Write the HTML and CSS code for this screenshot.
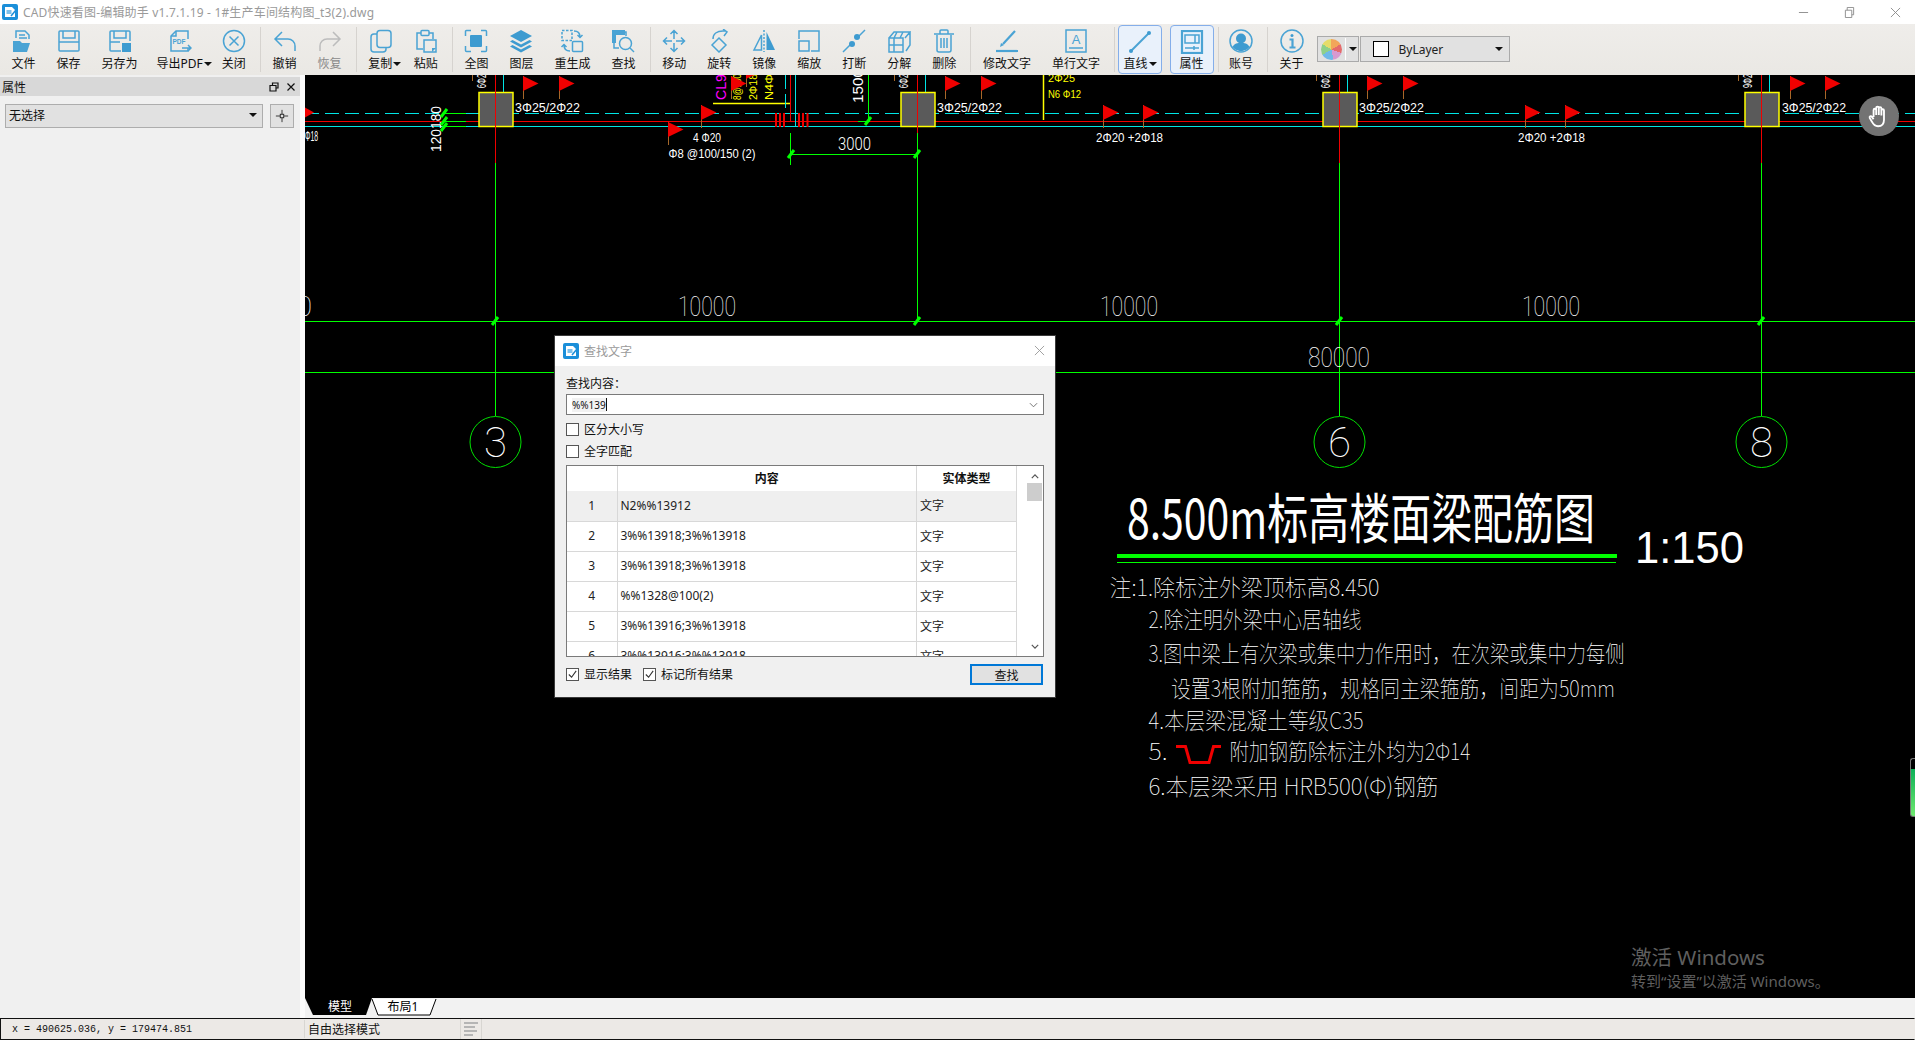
FILE: index.html
```html
<!DOCTYPE html>
<html lang="zh-CN">
<head>
<meta charset="utf-8">
<title>CAD快速看图</title>
<link rel="stylesheet" href="styles.css">
</head>
<body>
<div class="app">
  <header class="titlebar">
    <svg class="logo" viewBox="0 0 16 16"><rect width="16" height="16" rx="2" fill="#1b8fd9"/><path d="M3 3h7l3 3v7H3z" fill="#fff"/><rect x="4.500" y="6" width="5" height="4" fill="#7cc0ea"/><path d="M9 12l5-6" stroke="#1b8fd9" stroke-width="1.500"/></svg>
    <span class="title-text">CAD快速看图-编辑助手 v1.7.1.19 - 1#生产车间结构图_t3(2).dwg</span>
    <div class="winbtns">
      <svg class="winbtn" viewBox="0 0 12 12"><path d="M1 6h10" /></svg>
      <svg class="winbtn" viewBox="0 0 12 12"><path d="M1.500 3.500h7v8h-7zM3.500 3.500v-3h7v8h-2"/></svg>
      <svg class="winbtn" viewBox="0 0 12 12"><path d="M1 1l10 10M11 1L1 11"/></svg>
    </div>
  </header>

  <nav class="toolbar">
    <div class="tool"><svg class="ic" viewBox="0 0 24 24"><path d="M4 9V2h9l4 4v4"/><path d="M7 6h6M7 9h8" /><path class="f" d="M1 12h7l2 2h8l-3 9H1z"/></svg><span>文件</span></div>
    <div class="tool"><svg class="ic" viewBox="0 0 24 24"><path d="M2 3a1 1 0 0 1 1-1h18a1 1 0 0 1 1 1v18a1 1 0 0 1-1 1H3a1 1 0 0 1-1-1z"/><path d="M6 2v7h12V2M2 13h20"/></svg><span>保存</span></div>
    <div class="tool"><svg class="ic" viewBox="0 0 24 24"><path d="M13 22H3a1 1 0 0 1-1-1V3a1 1 0 0 1 1-1h18a1 1 0 0 1 1 1v9"/><path d="M6 2v7h12V2M2 13h10"/><rect class="fl" x="14" y="14" width="9" height="9"/></svg><span>另存为</span></div>
    <div class="tool drop drop-pdf"><svg class="ic off" viewBox="0 0 24 24"><path d="M20 10V2H8L3 7v15h17v-3"/><path d="M3 7h5V2"/><text class="pdf" x="4.500" y="15">PDF</text><path d="M14 19h9M20 16l3 3-3 3"/></svg><span class="droplabel">导出PDF<i class="caret"></i></span></div>
    <div class="tool"><svg class="ic" viewBox="0 0 24 24"><circle cx="12" cy="12" r="10.500"/><path d="M7.500 7.500l9 9M16.500 7.500l-9 9"/></svg><span>关闭</span></div>
    <div class="sep"></div>
    <div class="tool"><svg class="ic" viewBox="0 0 24 24"><path d="M9 3L2 10l7 7M2 10h13a7 7 0 0 1 7 7v5"/></svg><span>撤销</span></div>
    <div class="tool"><svg class="ic grey" viewBox="0 0 24 24"><path d="M15 3l7 7-7 7M22 10H9a7 7 0 0 0-7 7v5"/></svg><span class="dim">恢复</span></div>
    <div class="sep"></div>
    <div class="tool drop"><svg class="ic off" viewBox="0 0 24 24"><rect x="8" y="1.500" width="14" height="17" rx="3"/><path d="M8 5H5a3 3 0 0 0-3 3v12a3 3 0 0 0 3 3h9a3 3 0 0 0 3-3v-1"/></svg><span class="droplabel">复制<i class="caret"></i></span></div>
    <div class="tool"><svg class="ic" viewBox="0 0 24 24"><path d="M9 20H3V4h4M15 4h4v6"/><rect x="7" y="1.500" width="8" height="5" rx="1"/><path d="M10 11h12v12H10z"/><path class="f" d="M18 23l4-4h-4z"/></svg><span>粘贴</span></div>
    <div class="sep"></div>
    <div class="tool"><svg class="ic" viewBox="0 0 24 24"><path d="M1.500 7V2.500a1 1 0 0 1 1-1H7M17 1.500h4.500a1 1 0 0 1 1 1V7M22.500 17v4.500a1 1 0 0 1-1 1H17M7 22.500H2.500a1 1 0 0 1-1-1V17"/><rect class="fl" x="6" y="6" width="12" height="12" rx="1"/></svg><span>全图</span></div>
    <div class="tool"><svg class="ic" viewBox="0 0 24 24"><path class="fl" d="M12 1l11 6-11 6L1 7z"/><path class="fl" d="M3.500 11L1 12.500l11 6 11-6-2.500-1.500-8.500 4.500z"/><path class="fl" d="M3.500 16L1 17.500l11 6 11-6-2.500-1.500-8.500 4.500z"/></svg><span>图层</span></div>
    <div class="tool"><svg class="ic" viewBox="0 0 24 24"><rect x="2" y="1.500" width="10" height="10" stroke-dasharray="2.500 1.500"/><rect x="12.500" y="12.500" width="10" height="10" rx="1"/><path d="M14 2c4 0 6 2 6 6M17.500 6l2.500 2.500L22.500 6M10 22c-4 0-6-2-6-6M1.500 18L4 15.500 6.500 18"/></svg><span>重生成</span></div>
    <div class="tool"><svg class="ic" viewBox="0 0 24 24"><path d="M8 19H3V3h12v4"/><path class="f" d="M1 1h13v5H5v8H1z"/><circle cx="14.500" cy="14.500" r="6"/><path d="M19 19l4 4"/></svg><span>查找</span></div>
    <div class="sep"></div>
    <div class="tool"><svg class="ic" viewBox="0 0 24 24"><path d="M12 2v8M12 14v8M2 12h8M14 12h8M8.500 5L12 1.500 15.500 5M8.500 19l3.500 3.500 3.500-3.500M5 8.500L1.500 12 5 15.500M19 8.500l3.500 3.500-3.500 3.500"/></svg><span>移动</span></div>
    <div class="tool"><svg class="ic" viewBox="0 0 24 24"><path d="M12 9l7 7-7 7-7-7z"/><path d="M6 10c0-5 4-8 10-8h3M16 0l4 3-3 4"/></svg><span>旋转</span></div>
    <div class="tool"><svg class="ic" viewBox="0 0 24 24"><path d="M9.500 6L2 21h7.500z"/><path class="fl" d="M14.500 3L23 21h-8.500z"/><path d="M12 1v22" stroke-dasharray="2 1.500"/></svg><span>镜像</span></div>
    <div class="tool"><svg class="ic" viewBox="0 0 24 24"><path d="M2 10V2h20v20h-8"/><rect x="2" y="12" width="10" height="10"/></svg><span>缩放</span></div>
    <div class="tool"><svg class="ic" viewBox="0 0 24 24"><path d="M1 23l7-7M15 9l8-8"/><circle class="fl" cx="10" cy="15" r="3"/><circle class="fl" cx="15" cy="8" r="3"/></svg><span>打断</span></div>
    <div class="tool"><svg class="ic" viewBox="0 0 24 24"><path d="M2 9h14v14H2zM2 9l5-6h16l-5 6M23 3v13l-4 6M7 9v14M2 16h14M10 3l-3 6M16 3l-3 6"/></svg><span>分解</span></div>
    <div class="tool"><svg class="ic" viewBox="0 0 24 24"><path d="M5 6v15a2 2 0 0 0 2 2h10a2 2 0 0 0 2-2V6M2 5h20M8 5V2a1 1 0 0 1 1-1h6a1 1 0 0 1 1 1v3M9 9v10M12 9v10M15 9v10"/></svg><span>删除</span></div>
    <div class="sep"></div>
    <div class="tool"><svg class="ic" viewBox="0 0 24 24"><path class="thick" d="M20 2L8 15"/><path class="f" d="M5 18l1-4 3 2z"/><path class="thick" d="M1 22h22"/></svg><span>修改文字</span></div>
    <div class="tool"><svg class="ic" viewBox="0 0 24 24"><rect x="2" y="1" width="20" height="22"/><text class="pdf big" x="12" y="15">A</text><path d="M5 19h14"/></svg><span>单行文字</span></div>
    <div class="sep sep-tight"></div>
    <div class="tool hot"><svg class="ic" viewBox="0 0 24 24"><path class="line" d="M3 21L21 3"/><circle class="fl" cx="3" cy="21" r="2"/><circle class="fl" cx="21" cy="3" r="2"/></svg><span class="droplabel">直线<i class="caret"></i></span></div>
    <div class="tool hot hot2"><svg class="ic" viewBox="0 0 24 24"><rect class="thick" x="2" y="1" width="20" height="22"/><path d="M5 5h14v8H5zM15 5v8M5 18h14M14 16v4"/></svg><span>属性</span></div>
    <div class="sep sep-tight2"></div>
    <div class="tool acct"><svg class="ic" viewBox="0 0 24 24"><circle cx="12" cy="12" r="11"/><circle class="fl" cx="12" cy="9.500" r="5"/><path class="fl" d="M3.500 18c2-4 5-4 8.500-4s6.500 0 8.500 4c-4.500 5.500-12.500 5.500-17 0z"/></svg><span>账号</span></div>
    <div class="sep sep-tight3"></div>
    <div class="tool about"><svg class="ic" viewBox="0 0 24 24"><circle cx="12" cy="12" r="11"/><circle class="fl" cx="12" cy="6.500" r="1.500"/><path class="thick" d="M9.500 10.500H12.500V18M9.500 18.500h6"/></svg><span>关于</span></div>
    <div class="colorbox"><div class="wheel"></div><i class="combodiv"></i><i class="caret"></i></div>
    <div class="layerbox"><i class="swatch"></i><span class="layername">ByLayer</span><i class="caret"></i></div>
  </nav>

  <main class="main">
    <aside class="panel">
      <div class="panel-head"><span>属性</span>
        <span class="panel-icons">
          <svg class="dock" viewBox="0 0 10 10"><path d="M3.500 3V1h5.500v5H7M1 3.500h6v5.500H1z"/></svg>
          <svg class="dock" viewBox="0 0 10 10"><path d="M1.500 1.500l7 7M8.500 1.500l-7 7"/></svg>
        </span>
      </div>
      <div class="panel-row">
        <div class="select"><span>无选择</span><i class="caret"></i></div>
        <div class="pick"><svg viewBox="0 0 16 16" class="pick-ic"><path d="M8 1v5M8 10v5M1 8h5M10 8h5"/><rect x="6" y="6" width="4" height="4"/></svg></div>
      </div>
    </aside>
    <div class="gutter"></div>
    <section class="workspace">
      <svg class="cad" viewBox="305 75 1610 923" preserveAspectRatio="none">
        <defs>
          <g id="flag"><path class="pole" d="M.5 0v23"/><path class="redfill" d="M0 0l15.500 7.500L0 15z"/></g>
          <g id="tick"><path class="tickmark" d="M-3 4L3 -4"/></g>
        </defs>

        <!-- plan lines -->
        <path class="cy dash" d="M305 113.500H1915"/>
        <path class="rd" d="M305 121.500H1915"/>
        <path class="cy" d="M305 126.500H1915"/>
        <path class="redfill" d="M305 107.500l9 5-9 5z"/>
        <text class="cadtxt" x="305" y="141" textLength="13" lengthAdjust="spacingAndGlyphs">Φ18</text>

        <!-- rotated dims -->
        <text class="cadtxt out" transform="translate(441 152) rotate(-90)" textLength="46" lengthAdjust="spacingAndGlyphs">120180</text>
        <path class="gr" d="M443 113.500h23M443 121.500h23M443 126.500h23"/>
        <use href="#tick" x="444" y="113"/><use href="#tick" x="444" y="121"/><use href="#tick" x="444" y="127"/>

        <!-- column 3 -->
        <g>
          <path class="gr" d="M495.500 163V416"/>
          <path class="cy" d="M503.500 75v17"/>
          <path class="pole" d="M472.500 75v6"/>
          <text class="small" transform="translate(486 88) rotate(-90)" textLength="18" lengthAdjust="spacingAndGlyphs">6Φ25</text>
          <rect class="col" x="479" y="92.500" width="34" height="34"/>
          <path class="rd" d="M495.500 75V163"/>
          <use href="#flag" x="523" y="76"/><use href="#flag" x="559" y="76"/>
          <text class="small" x="515" y="112" textLength="65" lengthAdjust="spacingAndGlyphs">3Φ25/2Φ22</text>
        </g>
        <!-- column 5 -->
        <g>
          <path class="gr" d="M917.500 163V322"/>
          <path class="cy" d="M925.500 75v17"/>
          <path class="pole" d="M894.500 75v6"/>
          <text class="small" transform="translate(908 88) rotate(-90)" textLength="18" lengthAdjust="spacingAndGlyphs">6Φ25</text>
          <rect class="col" x="901" y="92.500" width="34" height="34"/>
          <path class="rd" d="M917.500 75V133"/>
          <use href="#flag" x="945" y="76"/><use href="#flag" x="981" y="76"/>
          <text class="small" x="937" y="112" textLength="65" lengthAdjust="spacingAndGlyphs">3Φ25/2Φ22</text>
        </g>
        <!-- column 6 -->
        <g>
          <path class="gr" d="M1339.500 163V416"/>
          <path class="cy" d="M1347.500 75v17"/>
          <path class="pole" d="M1316.500 75v6"/>
          <text class="small" transform="translate(1330 88) rotate(-90)" textLength="18" lengthAdjust="spacingAndGlyphs">6Φ25</text>
          <rect class="col" x="1323" y="92.500" width="34" height="34"/>
          <path class="rd" d="M1339.500 75V163"/>
          <use href="#flag" x="1367" y="76"/><use href="#flag" x="1403" y="76"/>
          <text class="small" x="1359" y="112" textLength="65" lengthAdjust="spacingAndGlyphs">3Φ25/2Φ22</text>
        </g>
        <!-- column 8 -->
        <g>
          <path class="gr" d="M1761.500 163V416"/>
          <path class="cy" d="M1769.500 75v17"/>
          <path class="pole" d="M1738.500 75v6"/>
          <text class="small" transform="translate(1752 88) rotate(-90)" textLength="18" lengthAdjust="spacingAndGlyphs">9Φ25</text>
          <rect class="col" x="1745" y="92.500" width="34" height="34"/>
          <path class="rd" d="M1761.500 75V163"/>
          <use href="#flag" x="1790" y="76"/><use href="#flag" x="1825" y="76"/>
          <text class="small" x="1782" y="112" textLength="64" lengthAdjust="spacingAndGlyphs">3Φ25/2Φ22</text>
        </g>

        <!-- bay 3-5 details -->
        <use href="#flag" x="668" y="122"/><use href="#flag" x="701" y="105"/>
        <text class="small" x="693" y="142" textLength="28" lengthAdjust="spacingAndGlyphs">4 Φ20</text>
        <text class="small" x="668.500" y="158" textLength="87" lengthAdjust="spacingAndGlyphs">Φ8 @100/150 (2)</text>
        <text class="mag" transform="translate(726 100) rotate(-90)" textLength="26" lengthAdjust="spacingAndGlyphs">CL9</text>
        <text class="yel" transform="translate(741 100) rotate(-90)" textLength="26" lengthAdjust="spacingAndGlyphs">8@100</text>
        <text class="yel" transform="translate(757 100) rotate(-90)" textLength="26" lengthAdjust="spacingAndGlyphs">2Φ18</text>
        <text class="yel" transform="translate(773 100) rotate(-90)" textLength="26" lengthAdjust="spacingAndGlyphs">N4Φ</text>
        <path class="ye" d="M713 103.500H790"/>
        <use href="#flag" x="731" y="76"/><use href="#flag" x="746" y="64"/>
        <path class="cy dash2" d="M785.500 75V113"/>
        <path class="cy" d="M795.500 75V126"/>
        <path class="rd" d="M790.500 75V122"/>
        <path class="redbar" d="M776 113v14M780 113v14M784 113v14M799 113v14M803 113v14M807.500 113v14"/>
        <path class="gr" d="M790.500 133v32M790.500 154.500H917.500M917.500 133v32"/>
        <use href="#tick" x="791" y="154"/><use href="#tick" x="917" y="154"/>
        <text class="dimtxt" x="838" y="150" textLength="33" lengthAdjust="spacingAndGlyphs">3000</text>
        <text class="cadtxt" transform="translate(863 103) rotate(-90)" textLength="34" lengthAdjust="spacingAndGlyphs">1500</text>
        <path class="gr" d="M868.500 75V121M858 121.500H870"/>
        <use href="#tick" x="868" y="121"/>

        <!-- bay 5-6, 6-8 -->
        <path class="ye" d="M1043.500 75V120"/>
        <text class="yel" x="1048" y="82" textLength="27" lengthAdjust="spacingAndGlyphs">2Φ25</text>
        <text class="yel" x="1048" y="98" textLength="33" lengthAdjust="spacingAndGlyphs">N6 Φ12</text>
        <use href="#flag" x="1103" y="105"/><use href="#flag" x="1143" y="105"/>
        <text class="small" x="1096" y="142" textLength="67" lengthAdjust="spacingAndGlyphs">2Φ20 +2Φ18</text>
        <use href="#flag" x="1525" y="105"/><use href="#flag" x="1565" y="105"/>
        <text class="small" x="1518" y="142" textLength="67" lengthAdjust="spacingAndGlyphs">2Φ20 +2Φ18</text>

        <!-- dimension lines -->
        <path class="gr" d="M305 321.500H1915M305 372.500H1915"/>
        <use href="#tick" x="495" y="321"/><use href="#tick" x="917" y="321"/><use href="#tick" x="1339" y="321"/><use href="#tick" x="1761" y="321"/>
        <text class="dimbig" x="297" y="316" textLength="15" lengthAdjust="spacingAndGlyphs">0</text>
        <text class="dimbig" x="678" y="316" textLength="58" lengthAdjust="spacingAndGlyphs">10000</text>
        <text class="dimbig" x="1100" y="316" textLength="58" lengthAdjust="spacingAndGlyphs">10000</text>
        <text class="dimbig" x="1522" y="316" textLength="58" lengthAdjust="spacingAndGlyphs">10000</text>
        <text class="dimbig" x="1308" y="367" textLength="62" lengthAdjust="spacingAndGlyphs">80000</text>

        <!-- axis bubbles -->
        <circle class="bubble" cx="495.500" cy="442" r="25.500"/>
        <text class="axis" x="495.500" y="457">3</text>
        <circle class="bubble" cx="1339.500" cy="442" r="25.500"/>
        <text class="axis" x="1339.500" y="457">6</text>
        <circle class="bubble" cx="1761.500" cy="442" r="25.500"/>
        <text class="axis" x="1761.500" y="457">8</text>

        <!-- drawing title -->
        <text class="dtitle" x="1127" y="539" textLength="468" lengthAdjust="spacingAndGlyphs">8.500m标高楼面梁配筋图</text>
        <path class="gr4" d="M1117 556H1617"/>
        <path class="gr" d="M1117 562.500H1616"/>
        <text class="scale" x="1635" y="563" textLength="109" lengthAdjust="spacingAndGlyphs">1:150</text>

        <!-- notes -->
        <text class="note" x="1109.500" y="596" textLength="270" lengthAdjust="spacingAndGlyphs">注:1.除标注外梁顶标高8.450</text>
        <text class="note" x="1148.500" y="628" textLength="213" lengthAdjust="spacingAndGlyphs">2.除注明外梁中心居轴线</text>
        <text class="note" x="1148.500" y="662" textLength="476" lengthAdjust="spacingAndGlyphs">3.图中梁上有次梁或集中力作用时，在次梁或集中力每侧</text>
        <text class="note" x="1171" y="697" textLength="444" lengthAdjust="spacingAndGlyphs">设置3根附加箍筋，规格同主梁箍筋，间距为50mm</text>
        <text class="note" x="1148.500" y="729" textLength="215" lengthAdjust="spacingAndGlyphs">4.本层梁混凝土等级C35</text>
        <text class="note" x="1148.500" y="760" textLength="19" lengthAdjust="spacingAndGlyphs">5.</text>
        <path class="rebar" d="M1176 746.500H1185.500L1190 762.500H1209L1213.500 746.500H1221"/>
        <text class="note" x="1229.500" y="760" textLength="241" lengthAdjust="spacingAndGlyphs">附加钢筋除标注外均为2Φ14</text>
        <text class="note" x="1148.500" y="795" textLength="290" lengthAdjust="spacingAndGlyphs">6.本层梁采用 HRB500(Φ)钢筋</text>
      </svg>
      <div class="tabstrip">
        <svg class="tabs" viewBox="0 0 140 19">
          <path class="tab-on" d="M0 0H67L61 17H8z"/>
          <path class="tab-off" d="M67 1L73 17H125L131 1"/>
          <text class="tabtxt on" x="35" y="13">模型</text>
          <text class="tabtxt" x="98" y="13">布局1</text>
        </svg>
      </div>
      <div class="hand"><svg viewBox="0 0 24 24" class="hand-ic"><path d="M7 13V6.500a1.200 1.200 0 0 1 2.400 0V11M9.400 11V4.500a1.200 1.200 0 0 1 2.400 0V11M11.800 11V5a1.200 1.200 0 0 1 2.400 0v6.500M14.200 11.500V7a1.200 1.200 0 0 1 2.400 0v8.500c0 3.500-2 6-5.500 6-3 0-4.500-2-5.500-4L3.500 14c-.7-1.500 1-2.500 2-1.200L7 15"/></svg></div>
      <div class="edgebar"></div>
      <div class="watermark"><div class="wm1">激活 Windows</div><div class="wm2">转到“设置”以激活 Windows。</div></div>
    </section>
  </main>

  <footer class="status">
    <div class="coords">x = 490625.036, y = 179474.851</div>
    <div class="mode">自由选择模式</div>
    <div class="status-ic"><i class="sl s1"></i><i class="sl s2"></i><i class="sl s3"></i><i class="sl s4"></i></div>
  </footer>

  <div class="dialog">
    <div class="dlg-title">
      <svg class="dlg-logo" viewBox="0 0 16 16"><rect width="16" height="16" rx="2" fill="#1b8fd9"/><path d="M3 3h7l3 3v7H3z" fill="#fff"/><rect x="4.500" y="6" width="5" height="4" fill="#7cc0ea"/><path d="M9 12l5-6" stroke="#1b8fd9" stroke-width="1.500"/></svg>
      <span class="dlg-name">查找文字</span>
      <svg class="dlg-x" viewBox="0 0 12 12"><path d="M1 1l10 10M11 1L1 11"/></svg>
    </div>
    <div class="dlg-body">
      <div class="dlg-label">查找内容：</div>
      <div class="dlg-input"><span class="typed">%%139</span><i class="cursor"></i><svg class="chev" viewBox="0 0 10 6"><path d="M1 1l4 4 4-4"/></svg></div>
      <label class="chk"><i class="box"></i>区分大小写</label>
      <label class="chk"><i class="box"></i>全字匹配</label>
      <div class="grid-wrap">
        <div class="grid-clip">
          <table class="grid">
            <thead><tr><th></th><th>内容</th><th>实体类型</th></tr></thead>
            <tbody>
              <tr class="sel"><td class="n">1</td><td>N2%%13912</td><td>文字</td></tr>
              <tr><td class="n">2</td><td>3%%13918;3%%13918</td><td>文字</td></tr>
              <tr><td class="n">3</td><td>3%%13918;3%%13918</td><td>文字</td></tr>
              <tr><td class="n">4</td><td>%%1328@100(2)</td><td>文字</td></tr>
              <tr><td class="n">5</td><td>3%%13916;3%%13918</td><td>文字</td></tr>
              <tr><td class="n">6</td><td>3%%13916;3%%13918</td><td>文字</td></tr>
            </tbody>
          </table>
        </div>
        <div class="vscroll">
          <svg class="arr" viewBox="0 0 10 6"><path d="M1 5l4-4 4 4"/></svg>
          <div class="thumb"></div>
          <svg class="arr arr-down" viewBox="0 0 10 6"><path d="M1 1l4 4 4-4"/></svg>
        </div>
      </div>
      <div class="dlg-foot">
        <label class="chk2"><i class="box"><svg viewBox="0 0 12 12" class="tickbox"><path d="M2 6l3 3 5-7"/></svg></i>显示结果</label>
        <label class="chk2"><i class="box"><svg viewBox="0 0 12 12" class="tickbox"><path d="M2 6l3 3 5-7"/></svg></i>标记所有结果</label>
        <button class="find">查找</button>
      </div>
    </div>
  </div>
</div>
</body>
</html>
```

FILE: styles.css
```css
* { box-sizing: border-box; }
html, body { margin: 0; height: 100%; overflow: hidden; }
body { font-family: "Noto Sans", "Noto Sans CJK SC", sans-serif; font-size: 12px; color: #111; }
i { display: block; font-style: normal; }

.app { position: relative; display: flex; flex-direction: column; width: 1915px; height: 1040px; background: #f0f0f0; }

/* title bar */
.titlebar { flex: 0 0 24px; display: flex; align-items: center; background: #fff; padding-left: 2px; }
.logo { width: 16px; height: 16px; }
.title-text { margin-left: 5px; color: #9a9a9a; font-size: 12px; letter-spacing: .17px; }
.winbtns { margin-left: auto; display: flex; gap: 35px; padding-right: 14px; }
.winbtn { width: 11px; height: 11px; fill: none; stroke: #8a8a8a; stroke-width: 1; }

/* toolbar */
.toolbar { flex: 0 0 51px; display: flex; align-items: stretch; padding-left: 1px; background: linear-gradient(#efedea, #eae8e4); }
.tool { display: flex; flex-direction: column; align-items: center; padding: 5px 10.5px 0; white-space: nowrap; line-height: 14px; flex: none; }
.tool > span { margin-top: 4px; display: flex; align-items: center; }
.ic { width: 24px; height: 24px; fill: none; stroke: #4aa3d4; stroke-width: 1.5; flex: none; }
.ic.off { margin-right: 8px; }
.ic.grey { stroke: #bcbcbc; }
.ic .f { fill: #4aa3d4; stroke: none; }
.ic .fl { fill: #3e9bd0; stroke: none; }
.ic .thick { stroke-width: 2.2; }
.ic .line { stroke-width: 2; }
.ic .pdf { fill: #4aa3d4; stroke: none; font: bold 6.500px "Liberation Sans", sans-serif; }
.ic .pdf.big { font-size: 13px; text-anchor: middle; font-weight: normal; }
.dim { color: #8a8a8a; }
.drop { padding-right: 2px; }
.drop-pdf { margin-left: -2px; margin-right: -2.5px; }
.caret { width: 0; height: 0; border-left: 4px solid transparent; border-right: 4px solid transparent; border-top: 4px solid #111; flex: none; }
.droplabel .caret { margin-left: 1px; }
.sep { flex: none; width: 1px; margin: 3px 1.2px 3px 3.5px; background: #d6d3cf; }
.sep-tight { margin-right: 3px; }
.hot { width: 44px; padding: 4px 0 0; margin-top: 1px; height: 49px; background: #e9f1fb; border: 1px solid #84aeea; border-radius: 4px; }
.hot > span { margin-top: 3px; }
.hot2 { margin-left: 7.500px; }
.sep-tight2 { margin-left: 4px; margin-right: 0; }
.acct { padding: 5px 10.5px 0; }
.sep-tight3 { margin-left: 3px; margin-right: 0; }
.about { padding: 5px 0 0; width: 24px; margin-left: 12px; }
.colorbox { flex: none; width: 42px; height: 26px; margin: 12px 0 0 13px; padding-left: 3px; display: flex; align-items: center; background: #e1e1e1; border: 1px solid #aaa; }
.wheel { width: 21px; height: 21px; border-radius: 50%; background: conic-gradient(#f2a65a 0 60deg, #e46b6b 60deg 110deg, #d79ad0 110deg 170deg, #6fb9e8 170deg 240deg, #8fd08a 240deg 300deg, #e6dc6a 300deg 360deg); }
.combodiv { width: 1px; height: 22px; margin: 0 3px 0 3px; background: #fff; }
.layerbox { flex: none; width: 150px; height: 26px; margin: 12px 0 0 1px; padding: 0 6px 0 12px; display: flex; align-items: center; background: #e1e1e1; border: 1px solid #aaa; }
.swatch { width: 16px; height: 16px; background: #fff; border: 1px solid #000; }
.layername { margin-left: 10px; flex: 1; font-family: "Noto Sans", sans-serif; color: #222; }

/* main */
.main { flex: 1; display: flex; min-height: 0; }
.panel { flex: 0 0 300px; background: #f0f0f0; }
.panel-head { height: 19px; margin-top: 2px; padding: 0 4px 0 2px; display: flex; align-items: center; justify-content: space-between; background: #d8d8d8; }
.panel-icons { display: flex; gap: 7px; }
.dock { width: 10px; height: 10px; fill: none; stroke: #111; stroke-width: 1.200; }
.panel-row { display: flex; gap: 7px; padding: 8px 6px 0 5px; }
.select { flex: 1; height: 24px; padding: 0 5px 2px 3px; display: flex; align-items: center; justify-content: space-between; background: #e1e1e1; border: 1px solid #adadad; font-size: 12px; }
.pick { flex: 0 0 24px; height: 24px; display: flex; align-items: center; justify-content: center; background: #e1e1e1; border: 1px solid #adadad; }
.pick-ic { width: 14px; height: 14px; fill: none; stroke: #222; }
.gutter { flex: 0 0 5px; background: #fbfbfb; }
.workspace { position: relative; flex: 1; display: flex; flex-direction: column; min-width: 0; }

/* CAD canvas */
.cad { flex: 0 0 923px; width: 1610px; height: 923px; background: #000; display: block; }
.cad path { fill: none; }
.cy { stroke: #00e5e5; stroke-width: 1; }
.dash { stroke-dasharray: 14 6; }
.dash2 { stroke-dasharray: 14 5; }
.rd { stroke: #f00000; stroke-width: 1; }
.gr { stroke: #00ff00; stroke-width: 1; }
.gr4 { stroke: #00ff00; stroke-width: 4; }
.ye { stroke: #ffff00; stroke-width: 1.500; }
.pole { stroke: #a5682a; stroke-width: 1; }
.cad .redfill { fill: #f00000; }
.redbar { stroke: #f00000; stroke-width: 2; }
.rebar { stroke: #f00000; stroke-width: 3; }
.tickmark { stroke: #00ff00; stroke-width: 3; }
.col { fill: #5a5a5a; stroke: #ffff00; stroke-width: 1.500; }
.bubble { fill: none; stroke: #00e000; stroke-width: 1; }
.cad text { font-family: "Liberation Sans Narrow", "Liberation Sans", "Noto Sans CJK SC", sans-serif; fill: #fff; }
.small { font-size: 12px; }
.cadtxt { font-size: 14px; }
.cad .mag { fill: #ff00ff; font-size: 14px; }
.cad .yel { fill: #ffff00; font-size: 11px; }
.cad .dimtxt { font-family: Roboto, sans-serif; font-weight: 300; font-size: 19px; fill: #fff; }
.cad .dimbig { font-family: Roboto, sans-serif; font-weight: 100; font-size: 28px; fill: #fff; }
.cad .axis { font-family: Roboto, sans-serif; font-weight: 100; font-size: 42px; text-anchor: middle; fill: #fff; }
.cad .dtitle { font-family: "Noto Sans CJK SC", sans-serif; font-size: 54px; font-weight: 400; }
.cad .scale { font-family: "Liberation Sans", sans-serif; font-size: 44px; }
.cad .note { font-family: "Noto Sans CJK SC", sans-serif; font-size: 23px; font-weight: 100; }

/* tabs */
.tabstrip { flex: 1; background: #f2f2f2; }
.tabs { display: block; width: 140px; height: 19px; }
.tab-on { fill: #000; }
.tab-off { fill: #fff; stroke: #000; stroke-width: 1; }
.tabtxt { font-size: 12px; text-anchor: middle; fill: #000; }
.tabtxt.on { fill: #fff; }

/* overlays */
.hand { position: absolute; left: 1554px; top: 21px; width: 40px; height: 40px; border-radius: 50%; background: #737373; display: flex; align-items: center; justify-content: center; }
.hand-ic { width: 26px; height: 26px; fill: none; stroke: #fff; stroke-width: 1.700; }
.edgebar { position: absolute; right: 0; top: 683px; width: 5px; height: 59px; border-radius: 3px 0 0 3px; border: 1px solid #777; border-right: 0; background: linear-gradient(#000 0 10px, #0cb058 10px, #6fe86f); }
.watermark { position: absolute; left: 1326px; top: 870px; color: #5f5f5f; pointer-events: none; }
.wm1 { font-size: 20.500px; line-height: 24px; font-family: "Noto Sans", "Noto Sans CJK SC", sans-serif; }
.wm2 { font-size: 15px; line-height: 20px; margin-top: 2px; }

/* status bar */
.status { flex: 0 0 22px; display: flex; align-items: center; background: #ece9e6; border: 1px solid #111; border-right-color: #ece9e6; }
.coords { width: 303px; padding-left: 11px; font: 10px "Liberation Mono", monospace; color: #111; }
.mode { width: 156px; padding-left: 3px; border-left: 1px solid #d8d6d2; font-size: 12px; }
.status-ic { width: 22px; height: 20px; padding: 2px 3px; display: flex; flex-direction: column; justify-content: space-around; border-left: 1px solid #d8d6d2; border-right: 1px solid #d8d6d2; }
.sl { height: 2px; background: #b5b5b5; }
.s2 { width: 11px; }
.s3 { width: 13px; }
.s4 { width: 9px; }

/* dialog */
.dialog { position: absolute; left: 554px; top: 335px; width: 502px; height: 363px; border: 1px solid #3a3a3a; background: #f0f0f0; display: flex; flex-direction: column; }
.dlg-title { flex: 0 0 30px; display: flex; align-items: center; padding: 0 10px 1px 8px; background: #fff; }
.dlg-logo { width: 16px; height: 16px; }
.dlg-name { margin-left: 5px; color: #9a9a9a; }
.dlg-x { margin-left: auto; width: 11px; height: 11px; fill: none; stroke: #999; }
.dlg-body { flex: 1; padding: 0 11px; display: flex; flex-direction: column; }
.dlg-label { height: 28px; padding-top: 8px; line-height: 20px; padding-left: 0; }
.dlg-input { height: 21px; padding: 0 5px; display: flex; align-items: center; background: #fff; border: 1px solid #7a7a7a; }
.typed { font-size: 10px; background: #f2f2f2; }
.cursor { width: 1px; height: 13px; background: #111; }
.chev { margin-left: auto; width: 9px; height: 6px; fill: none; stroke: #666; }
.chk { display: flex; align-items: center; gap: 5px; height: 22px; }
.chk:first-of-type { margin-top: 3px; }
.box { flex: none; width: 13px; height: 13px; background: #fff; border: 1px solid #555; display: flex; }
.tickbox { width: 11px; height: 11px; fill: none; stroke: #333; stroke-width: 1.200; }
.grid-wrap { margin-top: 3px; height: 192px; display: flex; background: #fff; border: 1px solid #7a7a7a; overflow: hidden; }
.grid-clip { flex: 0 0 450px; overflow: hidden; }
.grid { width: 450px; border-collapse: collapse; table-layout: fixed; }
.grid th:nth-child(1) { width: 50px; }
.grid th:nth-child(3) { width: 100px; }
.grid th { height: 25px; padding: 0 0 2px; border-right: 1px solid #d8d8d8; font-size: 12px; font-weight: 700; }
.grid td { height: 30px; padding: 0 3px 1px; border-right: 1px solid #d8d8d8; border-bottom: 1px solid #d8d8d8; font-size: 12px; color: #222; white-space: nowrap; overflow: hidden; }
.grid td.n { text-align: center; }
.grid .sel td { background: #efefef; }
.vscroll { position: relative; flex: 1; }
.arr { position: absolute; left: 14px; top: 8px; width: 8px; height: 5px; fill: none; stroke: #555; stroke-width: 1.500; }
.arr-down { top: auto; bottom: 7px; }
.thumb { position: absolute; left: 10px; right: 1px; top: 17px; height: 18px; background: #cdcdcd; }
.dlg-foot { display: flex; align-items: center; gap: 11px; margin-top: 6px; height: 22px; }
.chk2 { display: flex; align-items: center; gap: 5px; }
.find { margin-left: auto; margin-right: 1px; width: 73px; height: 21px; padding: 0 0 1px; background: #e1e1e1; border: 2px solid #0078d7; font: inherit; color: #111; }
```
